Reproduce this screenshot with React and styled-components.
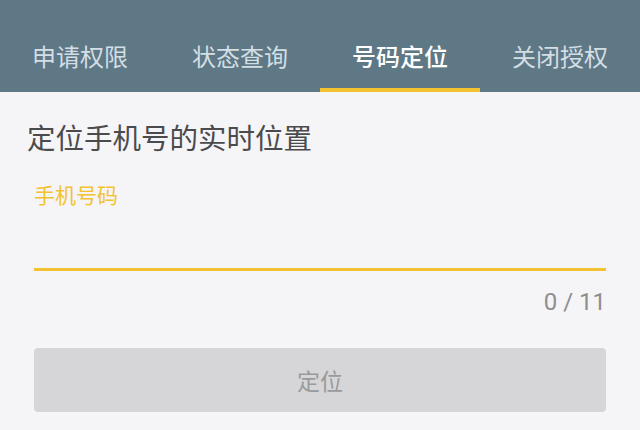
import React, { useState } from 'react';
import styled, { createGlobalStyle } from 'styled-components';

const GlobalStyle = createGlobalStyle`
  html, body {
    margin: 0;
    padding: 0;
    background: #f5f5f7;
  }
  body {
    font-family: Roboto, "Noto Sans CJK SC", sans-serif;
  }
`;

const Page = styled.div`
  width: 640px;
  height: 430px;
  overflow: hidden;
  background: #f5f5f7;
`;

const TabBar = styled.div`
  display: flex;
  height: 92px;
  background: #5f7886;
`;

const Tab = styled.div`
  flex: 1;
  display: flex;
  align-items: center;
  justify-content: center;
  box-sizing: border-box;
  padding-top: 28px;
  border-bottom: 4px solid ${(props) => (props.active ? '#f2c230' : 'transparent')};
  font-size: 24px;
  line-height: 28px;
  font-weight: ${(props) => (props.active ? 500 : 400)};
  color: ${(props) => (props.active ? '#ffffff' : '#d3dee5')};
  cursor: pointer;
`;

const Content = styled.div`
  padding: 30px 34px 0;
`;

const Title = styled.h1`
  margin: 0 0 24px -7px;
  font-size: 28.5px;
  line-height: 36px;
  font-weight: 400;
  color: #4b4b4d;
`;

const FieldLabel = styled.label`
  display: block;
  font-size: 21px;
  line-height: 28px;
  color: #f2c230;
`;

const PhoneInput = styled.input`
  display: block;
  width: 100%;
  box-sizing: border-box;
  height: 61px;
  padding: 0;
  border: 0;
  border-bottom: 3px solid #f2c230;
  background: transparent;
  outline: none;
  font-family: inherit;
  font-size: 24px;
  color: #333;
`;

const Counter = styled.div`
  margin-top: 17px;
  text-align: right;
  font-size: 24px;
  line-height: 28px;
  color: #8e8e90;
`;

const LocateButton = styled.button`
  display: block;
  width: 100%;
  height: 64px;
  margin-top: 32px;
  border: 0;
  border-radius: 4px;
  background: #d6d6d8;
  font-family: inherit;
  font-size: 23px;
  color: #9a9a9c;
`;

const tabs = ['申请权限', '状态查询', '号码定位', '关闭授权'];

export default function App() {
  const [active, setActive] = useState(2);
  const [phone, setPhone] = useState('');

  return (
    <Page>
      <GlobalStyle />
      <TabBar>
        {tabs.map((t, i) => (
          <Tab key={t} active={i === active} onClick={() => setActive(i)}>
            {t}
          </Tab>
        ))}
      </TabBar>
      <Content>
        <Title>定位手机号的实时位置</Title>
        <FieldLabel htmlFor="phone">手机号码</FieldLabel>
        <PhoneInput
          id="phone"
          value={phone}
          maxLength={11}
          onChange={(e) => setPhone(e.target.value)}
        />
        <Counter>{phone.length} / 11</Counter>
        <LocateButton disabled={phone.length < 11}>定位</LocateButton>
      </Content>
    </Page>
  );
}
